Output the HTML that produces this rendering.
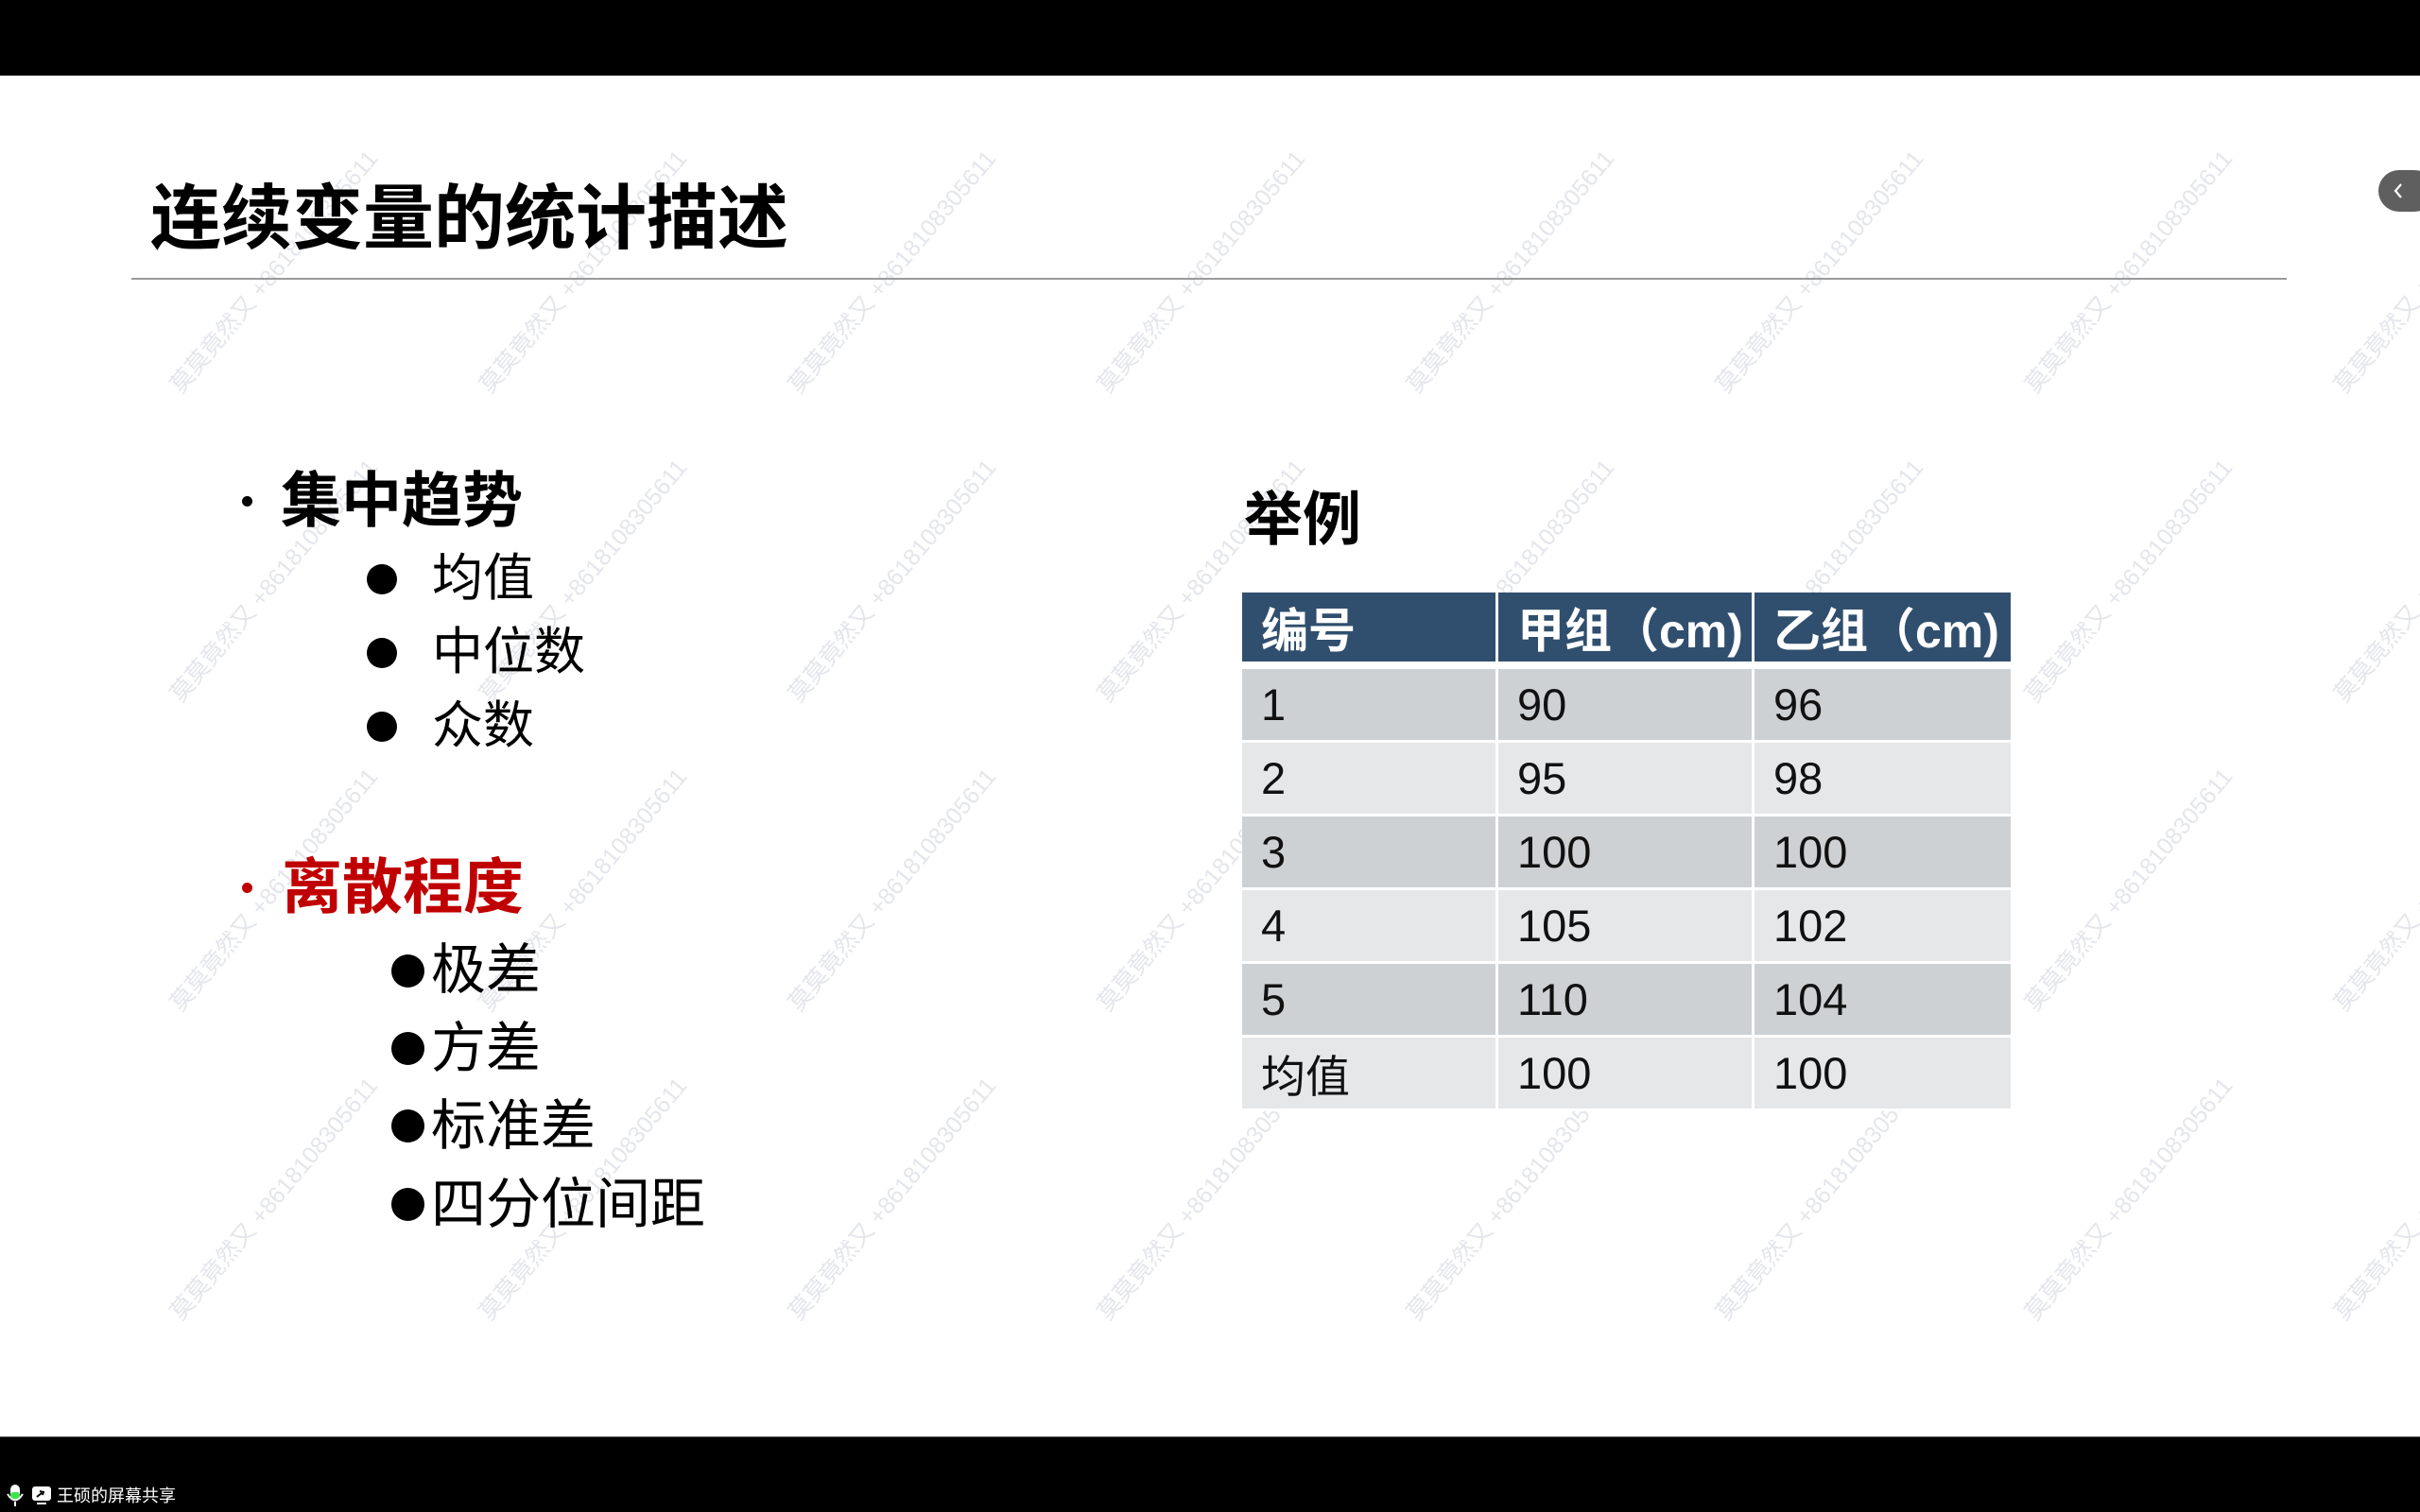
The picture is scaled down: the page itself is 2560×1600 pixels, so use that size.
<!DOCTYPE html>
<html><head><meta charset="utf-8">
<style>
*{margin:0;padding:0;box-sizing:border-box}
html,body{width:2560px;height:1600px;overflow:hidden;background:#fff;font-family:"Liberation Sans","Noto Sans CJK SC",sans-serif}
.abs{position:absolute}
.wm{position:absolute;font-size:25px;color:#e4e6ec;white-space:nowrap;transform-origin:0 100%;transform:rotate(-50deg);line-height:30px}
.t{position:absolute;white-space:nowrap;line-height:1}
.dot{position:absolute;background:#000;border-radius:50%}
table{position:absolute;left:1314px;top:627px;border-collapse:separate;border-spacing:0}
td{width:271px;height:78px;padding-left:20px;font-size:47px;color:#111;border-right:3px solid #fff;border-bottom:3px solid #fff;vertical-align:middle}
td:last-child{border-right:none}
tr.h td{background:#304f6e;color:#fff;font-weight:bold;font-size:50px;height:81px;border-bottom:8px solid #fff;border-right:3px solid #fff}
tr.h td:last-child{border-right:none}
tr.o td{background:#cdd1d4}
tr.e td{background:#e6e7e9}
</style></head><body>
<div class="abs" style="left:0;top:0;width:2560px;height:80px;background:#000"></div>
<div class="abs" style="left:0;top:1520px;width:2560px;height:80px;background:#000;border-top:1px solid #555"></div>

<div id="wms"></div>

<div class="t" style="left:159px;top:194px;font-size:75px;font-weight:bold;color:#000">连续变量的统计描述</div>
<div class="abs" style="left:139px;top:294px;width:2280px;height:2px;background:#9a9a9a"></div>

<div class="dot" style="left:256px;top:525px;width:11px;height:11px"></div>
<div class="t" style="left:297px;top:498px;font-size:64px;font-weight:bold">集中趋势</div>
<div class="dot" style="left:388px;top:597px;width:32px;height:32px"></div>
<div class="t" style="left:457px;top:585px;font-size:54px">均值</div>
<div class="dot" style="left:388px;top:675px;width:32px;height:32px"></div>
<div class="t" style="left:457px;top:663px;font-size:54px">中位数</div>
<div class="dot" style="left:388px;top:753px;width:32px;height:32px"></div>
<div class="t" style="left:457px;top:741px;font-size:54px">众数</div>

<div class="dot" style="left:256px;top:934px;width:11px;height:11px;background:#c00000"></div>
<div class="t" style="left:298px;top:907px;font-size:64px;font-weight:bold;color:#c00000">离散程度</div>
<div class="dot" style="left:414px;top:1010px;width:35px;height:35px"></div>
<div class="t" style="left:456px;top:998px;font-size:58px">极差</div>
<div class="dot" style="left:414px;top:1092px;width:35px;height:35px"></div>
<div class="t" style="left:456px;top:1081px;font-size:58px">方差</div>
<div class="dot" style="left:414px;top:1174px;width:35px;height:35px"></div>
<div class="t" style="left:456px;top:1163px;font-size:58px">标准差</div>
<div class="dot" style="left:414px;top:1257px;width:35px;height:35px"></div>
<div class="t" style="left:456px;top:1246px;font-size:58px">四分位间距</div>

<div class="t" style="left:1316px;top:520px;font-size:62px;font-weight:bold">举例</div>

<table>
<tr class="h"><td>编号</td><td>甲组（cm)</td><td>乙组（cm)</td></tr>
<tr class="o"><td>1</td><td>90</td><td>96</td></tr>
<tr class="e"><td>2</td><td>95</td><td>98</td></tr>
<tr class="o"><td>3</td><td>100</td><td>100</td></tr>
<tr class="e"><td>4</td><td>105</td><td>102</td></tr>
<tr class="o"><td>5</td><td>110</td><td>104</td></tr>
<tr class="e"><td>均值</td><td>100</td><td>100</td></tr>
</table>

<div class="abs" style="left:2516px;top:180px;width:60px;height:44px;background:#5f5f5f;border-radius:22px"></div>
<svg class="abs" style="left:2530px;top:192px" width="14" height="20"><path d="M10 3 L4 10 L10 17" stroke="#fff" stroke-width="2.2" fill="none"/></svg>

<svg class="abs" style="left:6px;top:1570px" width="22" height="26"><rect x="5" y="1" width="10" height="16" rx="5" fill="#fff"/><rect x="5" y="9" width="10" height="8" rx="3" fill="#3ee34a"/><path d="M2 11 Q10 24 18 11" stroke="#fff" stroke-width="2" fill="none"/><line x1="10" y1="19" x2="10" y2="24" stroke="#fff" stroke-width="2"/></svg>
<svg class="abs" style="left:33px;top:1572px" width="22" height="22"><rect x="1" y="1" width="20" height="15" rx="3" fill="#fff"/><path d="M6 12 L11 8 M9 6 L13 7 L12 10" stroke="#000" stroke-width="2" fill="none"/><rect x="6" y="18" width="10" height="2" fill="#fff"/></svg>
<div class="t" style="left:60px;top:1574px;font-size:18px;color:#fff">王硕的屏幕共享</div>

<script>
var h='';
for(var j=0;j<4;j++)for(var k=0;k<8;k++){
 var x=197+327*k,y=422+327*j;
 h+='<div class="wm" style="left:'+x+'px;top:'+(y-30)+'px">莫莫竟然又 +8618108305611</div>';
}
document.getElementById('wms').innerHTML=h;
</script>
</body></html>
